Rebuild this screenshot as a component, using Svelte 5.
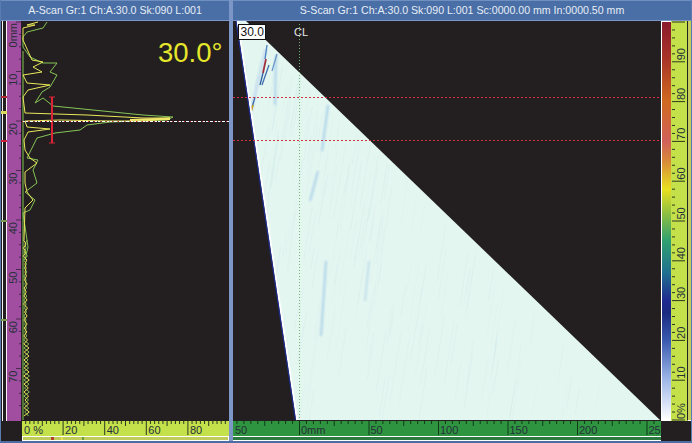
<script>
	const PCT = 2.08;
	const MM = 4.95;
	const SC = 1.39;

	const range = (from, to, step) => {
		const out = [];
		for (let v = from; v <= to; v += step) out.push(v);
		return out;
	};

	// depth ruler on the a-scan, y inside the body
	const depthTicks = range(0, 78, 2.5).map((v) => ({ y: 1 + v * MM, major: v % 10 === 0 }));
	const depthLabels = [10, 20, 30, 40, 50, 60, 70];

	// amplitude ruler below the a-scan
	const ampTicks = range(0, 100, 2).map((v) => ({ x: v * PCT - 0.5, major: v % 20 === 0, mid: v % 10 === 0 }));
	const ampLabels = [20, 40, 60, 80];

	// scan axis below the s-scan
	const ZERO = 66.5;
	const scanLabels = [50, 100, 150, 200, 250];
	const scanTicks = range(-45, 255, 5).map((v) => ({
		x: ZERO + v * SC,
		major: v % 50 === 0,
		mid: v % 25 === 0
	}));

	const colorTicks = range(0, 100, 2).map((v) => ({ y: 399 - v * 3.98, major: v % 10 === 0, mid: v % 5 === 0 }));
	const colorLabels = [10, 20, 30, 40, 50, 60, 70, 80, 90];

	// a-scan traces, read in page coordinates and moved into the plot
	const toPlot = (list) => list.map(([x, y]) => `${x - 22},${y - 21}`).join(' ');
	const greenTop = [[47,22],[43,28],[27,32],[23,37],[23,47],[30,57],[43,63],[57,63],[50,72],[57,75],[50,87],[42,92],[35,103],[43,98],[53,106],[143,115],[173,117],[167,120],[110,122],[87,125],[80,130],[55,133],[37,138],[32,148],[27,158],[38,160],[33,170],[37,183],[25,192],[35,200],[30,210],[23,213],[28,247],[25,260]];
	const yellowTop = [[38,22],[27,25],[35,25],[23,28],[23,40],[32,60],[43,62],[33,67],[42,72],[23,75],[27,83],[50,85],[28,90],[23,97],[25,113],[87,115],[143,118],[170,118],[145,121],[110,121],[60,120],[25,121],[27,127],[50,129],[28,132],[24,140],[25,150],[30,158],[37,163],[25,172],[25,183],[27,192],[33,200],[28,205],[25,208],[24,240]];

	// braided zigzag for the quiet lower part
	const wiggle = (seed, flip) => {
		const pts = [];
		let s = seed;
		let side = flip;
		for (let y = 240; y <= 419; y += 4) {
			s = (s * 9301 + 49297) % 233280;
			const amp = y > 340 ? 4.5 : 2.5;
			side = !side;
			pts.push([23.5 + (side ? amp : 0) + (s / 233280) * 1.5, y]);
		}
		return pts;
	};
	const greenLow = wiggle(17, false);
	const yellowLow = wiggle(71, true);

	// faint streaks of the s-scan, plot coordinates
	const streaks = [];
	let r = 11;
	const rnd = () => {
		r = (r * 9301 + 49297) % 233280;
		return r / 233280;
	};
	for (let i = 0; i < 170; i++) {
		const y = 40 + rnd() * 330;
		const len = 20 + rnd() * 55;
		const maxX = 14 + y * 1.035;
		const minX = 6 + y * 0.155;
		const x = minX + rnd() * (maxX - minX);
		streaks.push({ x1: x, y1: y, x2: x - len * 0.16, y2: y + len, o: 0.03 + rnd() * 0.06 });
	}
</script>

<div class="app">
	<section class="ascan">
		<header class="title">A-Scan Gr:1 Ch:A:30.0 Sk:090 L:001</header>
		<div class="ascan-body">
			<svg class="gates" width="6" height="400" viewBox="0 0 6 400">
				<rect x="1" y="0" width="1" height="400" fill="#f4f4f4" />
				<rect x="5" y="0" width="1" height="400" fill="#f4f4f4" />
				<rect x="0" y="75" width="6" height="2" fill="#b02a30" />
				<rect x="0" y="90" width="6" height="3" fill="#dcd860" />
				<rect x="0" y="119" width="6" height="2" fill="#d0203c" />
				<rect x="0" y="199" width="6" height="2" fill="#7a9a50" />
				<rect x="0" y="298" width="6" height="2" fill="#7a9a50" />
			</svg>
			<svg class="ruler-depth" width="14" height="400" viewBox="0 0 14 400">
				{#each depthTicks as t}
					<line x1={t.major ? 9 : 12} x2="14" y1={t.y} y2={t.y} />
				{/each}
				<text transform="translate(10 2) rotate(-90)" text-anchor="end">0mm</text>
				{#each depthLabels as v}
					<text transform="translate(10 {v * MM + 3}) rotate(-90)" text-anchor="end">{v}</text>
				{/each}
			</svg>
			<svg class="plot" width="207" height="400" viewBox="0 0 207 400">
				<line x1="1" x2="1" y1="30" y2="399" class="trace green" />
				<polyline points={toPlot(greenTop)} class="trace green" />
				<polyline points={toPlot(yellowTop)} class="trace yellow" />
				<polyline points={toPlot(greenLow)} class="trace green" />
				<polyline points={toPlot(yellowLow)} class="trace yellow" />
				<polygon points="108,98 148,96.5 148,99 108,100" fill="#efe66a" />
				<line x1="30" x2="30" y1="76" y2="122" stroke="#dc2436" stroke-width="2" />
				<line x1="27" x2="33" y1="76" y2="76" stroke="#dc2436" />
				<line x1="27" x2="33" y1="122" y2="122" stroke="#dc2436" />
				<line x1="0" x2="207" y1="100.5" y2="100.5" stroke="#fff" stroke-dasharray="3 1" />
				<line x1="0" x2="207" y1="100.5" y2="100.5" stroke="#d8303a" stroke-dasharray="1 5" />
				<text x="136" y="41" class="angle">30.0°</text>
			</svg>
		</div>
		<div class="foot">
			<div class="foot-corner"></div>
			<div class="foot-scale">
				<svg class="ruler-amp" width="207" height="15" viewBox="0 0 207 15">
					{#each ampTicks as t}
						<line x1={t.x} x2={t.x} y1="0" y2={t.major ? 14 : t.mid ? 5 : 3} />
					{/each}
					<text x="2" y="13">0 %</text>
					{#each ampLabels as v}
						<text x={v * PCT + 1.5} y="13">{v}</text>
					{/each}
				</svg>
				<svg class="strip" width="207" height="5" viewBox="0 0 207 5">
					<rect x="0.5" y="0.5" width="206" height="4" fill="#c0cc5a" stroke="#fff" />
					<rect x="29" y="1" width="3" height="3" fill="#b5402a" />
					<rect x="39" y="1" width="2" height="3" fill="#e8e050" />
					<rect x="60" y="1" width="2" height="3" fill="#6c9a3c" />
				</svg>
			</div>
		</div>
	</section>

	<div class="divider"></div>

	<section class="sscan">
		<header class="title">S-Scan Gr:1 Ch:A:30.0 Sk:090 L:001 Sc:0000.00 mm In:0000.50 mm</header>
		<div class="sscan-body">
			<svg class="plot" width="428" height="400" viewBox="0 0 428 400">
				<defs>
					<clipPath id="sector">
						<polygon points="4,0 13,0 427,399 64,399" />
					</clipPath>
					<filter id="soft" x="-50%" y="-10%" width="200%" height="120%">
						<feGaussianBlur stdDeviation="1" />
					</filter>
				</defs>
				<polygon points="4,0 13,0 427,399 64,399" fill="#e4f6f0" />
				<g clip-path="url(#sector)">
					{#each streaks as s}
						<line x1={s.x1} y1={s.y1} x2={s.x2} y2={s.y2} stroke="#8fc0d8" stroke-opacity={s.o} />
					{/each}
					<g filter="url(#soft)" stroke="#9cc8e8" fill="none" stroke-width="2" opacity="0.8">
						<line x1="95" y1="84" x2="89" y2="130" />
						<line x1="85" y1="150" x2="77" y2="180" />
						<line x1="93" y1="240" x2="88" y2="315" />
						<line x1="136" y1="240" x2="132" y2="280" stroke-width="1.2" />
						<line x1="43" y1="34" x2="42" y2="84" />
						<line x1="33" y1="28" x2="18" y2="90" stroke="#c0d8f0" stroke-width="3" />
					</g>
					<g stroke-width="1.3" fill="none">
						<line x1="34" y1="24" x2="32" y2="38" stroke="#4a80c0" />
						<line x1="33" y1="38" x2="30" y2="52" stroke="#a03040" stroke-width="1.8" />
						<line x1="30" y1="52" x2="27" y2="64" stroke="#3060a0" />
						<line x1="36" y1="44" x2="29" y2="64" stroke="#4070b0" />
						<line x1="44" y1="33" x2="39" y2="50" stroke="#6a98c8" />
						<line x1="22" y1="76" x2="18" y2="90" stroke="#3a68a8" />
						<line x1="20" y1="84" x2="17" y2="94" stroke="#c8a030" stroke-width="1.8" />
						<line x1="19" y1="100" x2="18" y2="110" stroke="#3060b0" />
					</g>
				</g>
				<line x1="4.5" y1="0" x2="64" y2="399" stroke="#fff" stroke-width="2" />
				<line x1="3" y1="0" x2="62.5" y2="399" stroke="#1c2c90" stroke-width="1.2" />
				<line x1={ZERO} x2={ZERO} y1="3" y2="399" class="center" />
				<line x1="0" x2="428" y1="76.5" y2="76.5" class="gate" />
				<line x1="0" x2="428" y1="119.5" y2="119.5" class="gate" />
				<rect x="5.5" y="3.5" width="27" height="15" fill="#fff" stroke="#111" />
				<text x="7.5" y="15" class="badge">30.0</text>
				<text x="61" y="15" class="cl">CL</text>
			</svg>
			<div class="colorbar"></div>
			<svg class="ruler-color" width="16" height="400" viewBox="0 0 16 400">
				{#each colorTicks as t}
					<line x1="1" x2={t.major ? 14 : t.mid ? 6 : 4} y1={t.y} y2={t.y} />
				{/each}
				<text transform="translate(14 398) rotate(-90)">0%</text>
				{#each colorLabels as v}
					<text transform="translate(14 {399 - v * 3.98 - 1.5}) rotate(-90)">{v}</text>
				{/each}
			</svg>
			<div class="color-strip"></div>
		</div>
		<div class="sscan-foot">
			<div class="foot-scale">
				<svg class="ruler-scan" width="428" height="15" viewBox="0 0 428 15">
					{#each scanTicks as t}
						<line x1={t.x} x2={t.x} y1="0" y2={t.major ? 14 : t.mid ? 5 : 3} />
					{/each}
					<text x="2" y="13">50</text>
					<text x={ZERO + 1.5} y="13">0mm</text>
					{#each scanLabels as v}
						<text x={ZERO + v * SC + 1.5} y="13">{v}</text>
					{/each}
				</svg>
				<svg class="strip" width="428" height="5" viewBox="0 0 428 5">
					<rect x="0" y="0" width="428" height="1" fill="#fff" />
					<rect x="0" y="1" width="428" height="3" fill="#2c7a40" />
					<rect x="0" y="4" width="428" height="1" fill="#fff" />
				</svg>
			</div>
		</div>
	</section>
</div>

<style>
	:global(body) {
		margin: 0;
		background: #231f20;
	}

	.app {
		width: 692px;
		height: 443px;
		display: flex;
		overflow: hidden;
		box-sizing: border-box;
		border-left: 1px solid #5a7cb0;
		border-right: 1px solid #5a7cb0;
		border-bottom: 2px solid #4a6ea4;
		background: #231f20;
		font-family: 'Liberation Sans', Arial, sans-serif;
	}

	svg {
		display: block;
		flex: none;
	}

	.ascan {
		width: 228px;
		flex: none;
		display: flex;
		flex-direction: column;
	}

	.sscan {
		flex: 1;
		min-width: 0;
		display: flex;
		flex-direction: column;
	}

	.divider {
		width: 4px;
		flex: none;
		background: #7c96c8;
	}

	.title {
		height: 21px;
		box-sizing: border-box;
		flex: none;
		background: #4a6fa6;
		border-top: 1px solid #6f8fc0;
		border-bottom: 1px solid #7c96c8;
		color: #e6edf5;
		font-size: 10.6px;
		line-height: 19px;
		text-align: center;
		white-space: nowrap;
	}

	.ascan-body,
	.sscan-body {
		display: flex;
		height: 400px;
		flex: none;
	}

	.ruler-depth {
		background: #a24ea0;
		margin-right: 1px;
	}

	.ruler-depth line {
		stroke: #4a2a50;
	}

	.ruler-depth text,
	.ruler-amp text,
	.ruler-scan text,
	.ruler-color text {
		font-size: 11px;
		fill: #25303a;
	}

	.plot {
		background: #231f20;
	}

	.trace {
		fill: none;
		stroke-width: 1;
	}

	.green {
		stroke: #86c455;
	}

	.yellow {
		stroke: #e8e85a;
	}

	.angle {
		font-size: 27.5px;
		fill: #e6e62c;
	}

	.center {
		stroke: #6fb46f;
		stroke-dasharray: 1 2;
	}

	.gate {
		stroke: #d03040;
		stroke-dasharray: 2 2;
	}

	.badge {
		font-size: 12px;
		fill: #111;
	}

	.cl {
		font-size: 11px;
		fill: #e8e8e8;
	}

	.foot {
		display: flex;
		flex: 1;
	}

	.foot-corner {
		width: 21px;
		flex: none;
	}

	.foot-scale {
		display: flex;
		flex-direction: column;
	}

	.ruler-amp {
		background: #c4e04a;
	}

	.ruler-amp line,
	.ruler-color line {
		stroke: #2c3a20;
	}

	.ruler-scan {
		background: #2f9440;
	}

	.ruler-scan line {
		stroke: #0e3a18;
	}

	.colorbar {
		width: 10px;
		flex: none;
		box-sizing: border-box;
		border: 1px solid #fff;
		border-right-width: 0;
		background: linear-gradient(
			to bottom,
			#8b1a2c 0%,
			#a83428 9%,
			#d06a20 20%,
			#d0605a 30%,
			#d88a38 35%,
			#e8e020 42%,
			#90c040 48%,
			#30a070 55%,
			#207090 63%,
			#202a90 70%,
			#1a2a80 73%,
			#3a5ab0 80%,
			#a0b8e8 90%,
			#ffffff 100%
		);
	}

	.ruler-color {
		background: #c4e04a;
	}

	.color-strip {
		width: 4px;
		flex: none;
		box-sizing: border-box;
		background: #c4cc5c;
		border-left: 1px solid #222;
		border-bottom: 1px solid #fff;
	}

	.sscan-foot {
		display: flex;
		flex: 1;
	}
</style>
